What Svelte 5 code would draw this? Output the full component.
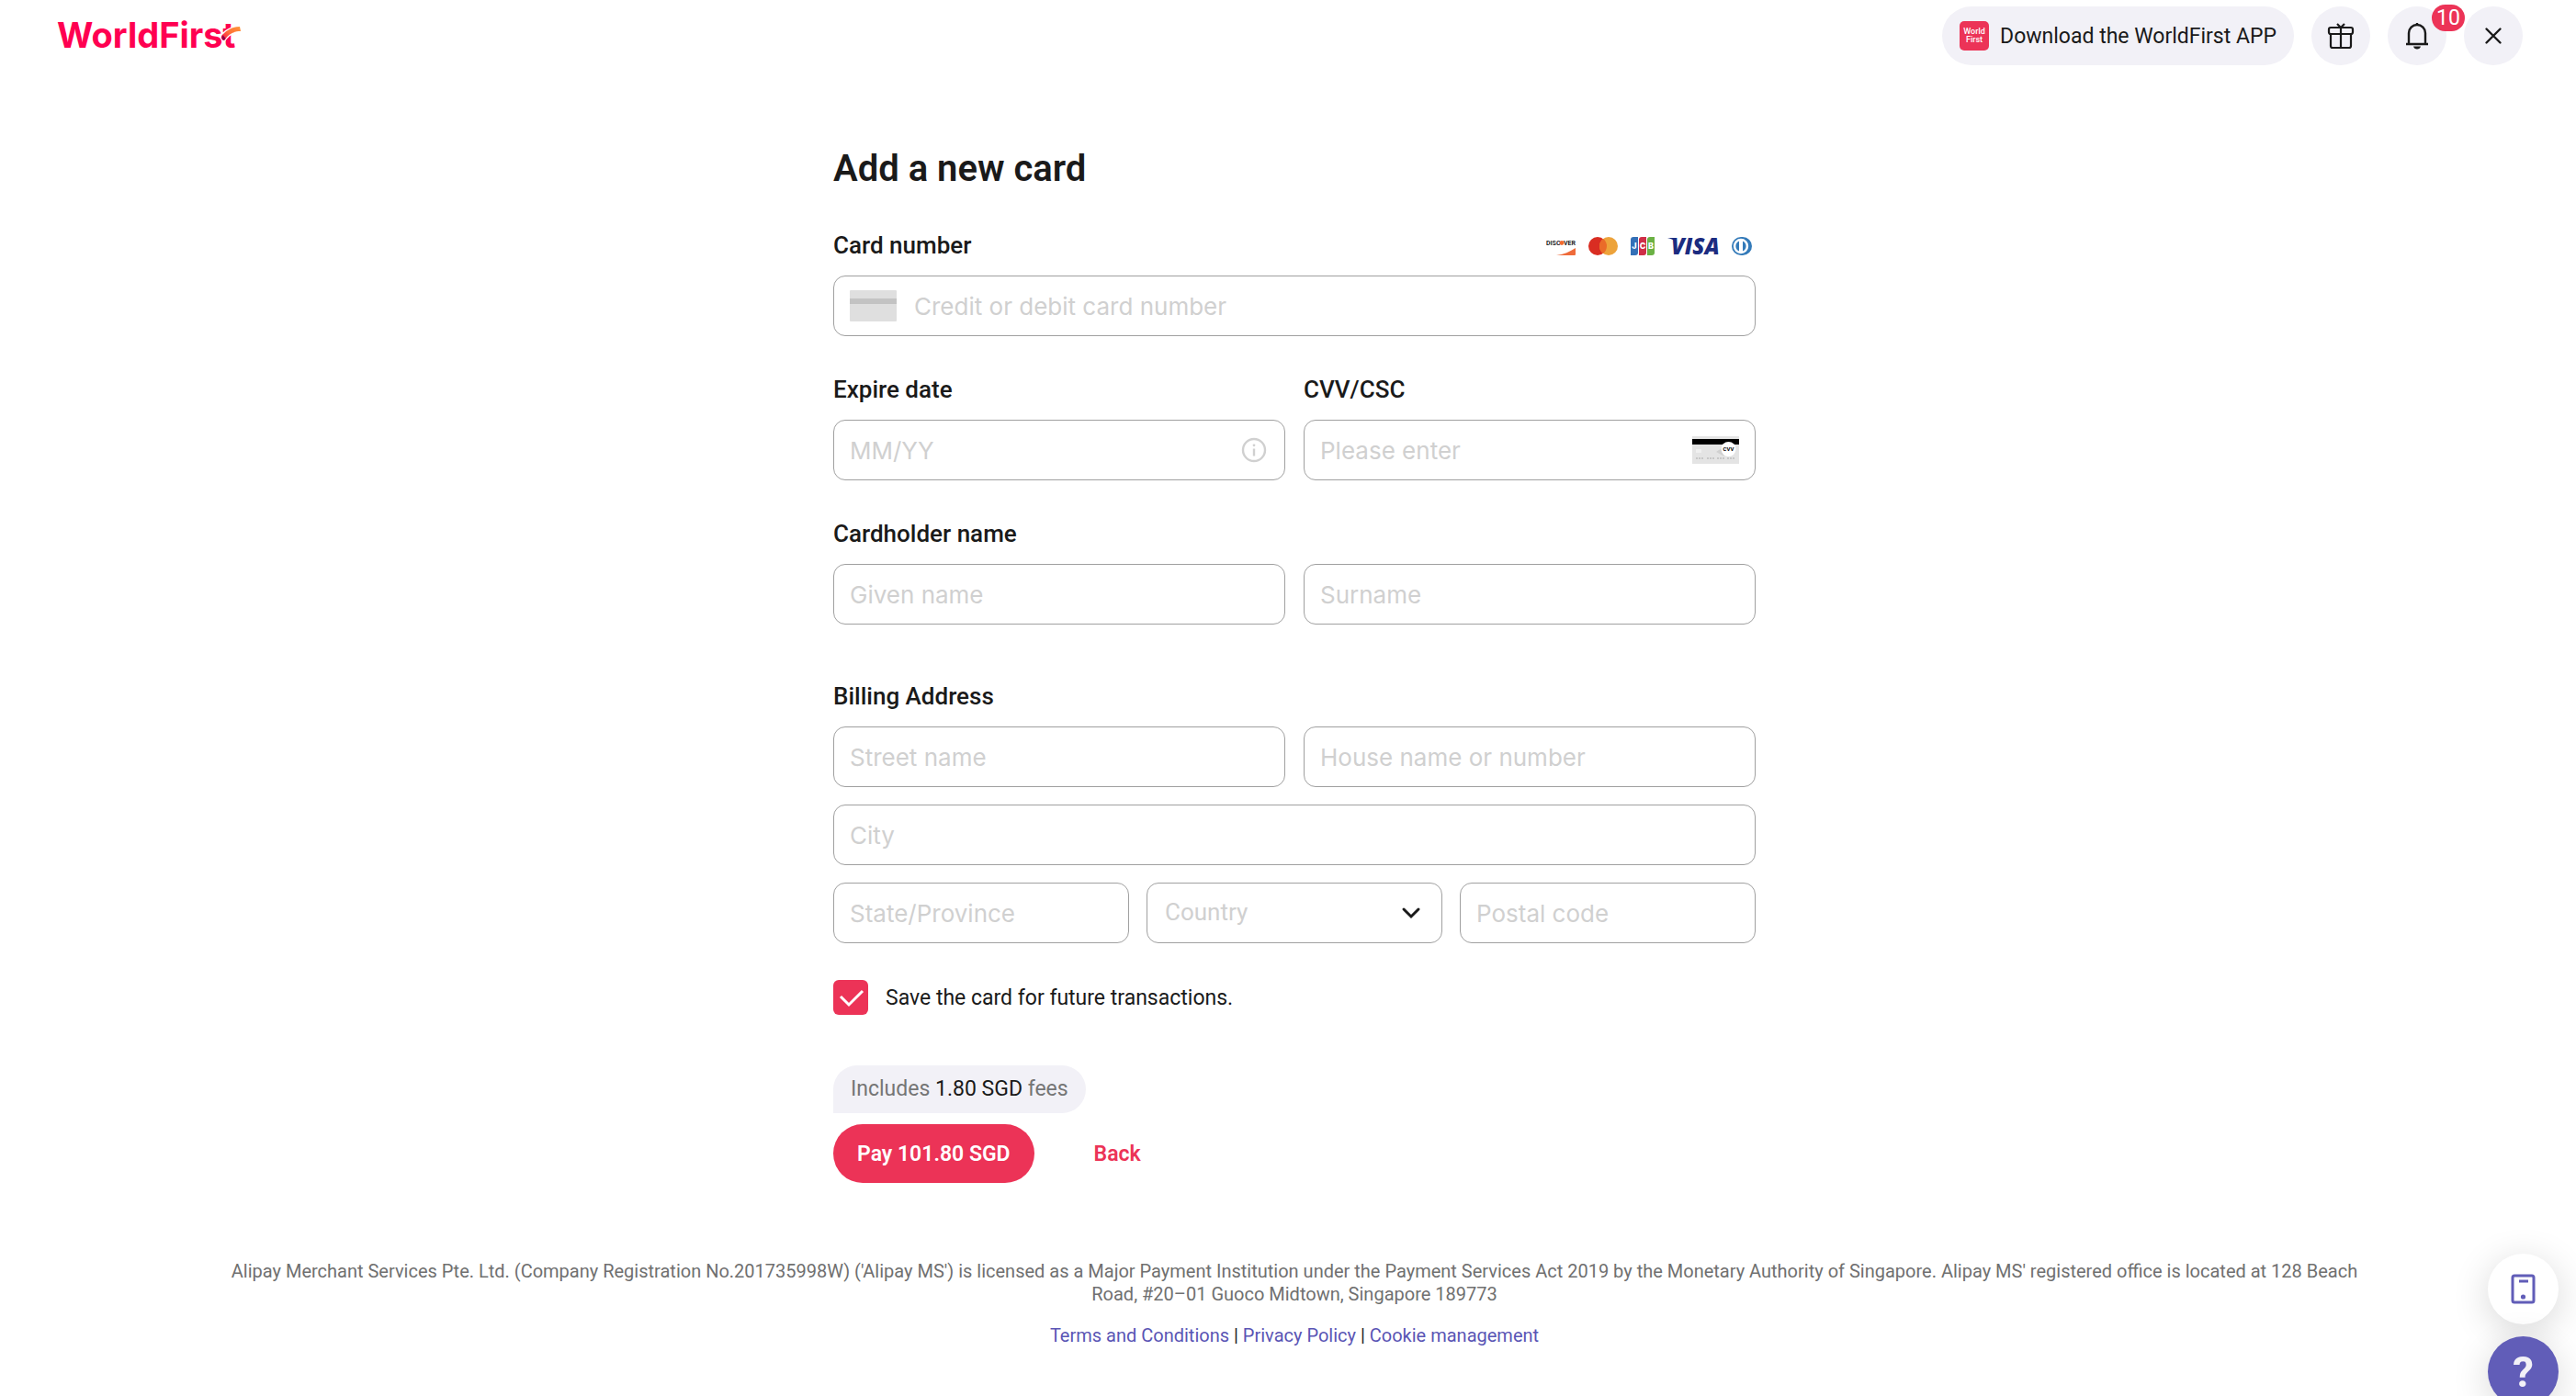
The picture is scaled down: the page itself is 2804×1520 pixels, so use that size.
<script lang="ts">
  let cardNumber = $state('')
  let expiry = $state('')
  let cvv = $state('')
  let givenName = $state('')
  let surname = $state('')
  let street = $state('')
  let house = $state('')
  let city = $state('')
  let province = $state('')
  let country = $state('')
  let postalCode = $state('')
  let saveCard = $state(true)

  const notifications = 10
  const countries = ['Singapore', 'Malaysia', 'United Kingdom', 'Australia']
</script>

<header class="topbar">
  <a class="logo" href="#home" aria-label="WorldFirst">
    <svg width="206" height="44" viewBox="0 0 206 44">
      <text class="wordmark" x="0" y="35">WorldFirst</text>
      <path d="M180 28c-3-3-3-6 0-9 5-5 12-8 20-8v7c-8 0-13 4-17 10z" fill="#fff" />
      <path d="M181 27c-3-2-3-5 0-7 5-5 11-8 18-8l1 5c-8 0-13 3-17 9z" fill="url(#swoosh)" />
      <path d="M181 21c-2 2-2 5 1 6 1-1 2-2 1-3s-2-2-2-3z" fill="#8c0046" />
      <defs>
        <linearGradient id="swoosh" x1="0" x2="1" y1="1" y2="0">
          <stop offset="0" stop-color="#ff0051" />
          <stop offset="0.5" stop-color="#ff7038" />
          <stop offset="1" stop-color="#ff9838" />
        </linearGradient>
      </defs>
    </svg>
  </a>

  <nav class="actions">
    <button class="download" type="button">
      <span class="app-icon" aria-hidden="true">World<br />First</span>
      Download the WorldFirst APP
    </button>
    <button class="round" type="button" aria-label="Rewards">
      <svg width="32" height="32" viewBox="0 0 32 32" fill="none" stroke="#1a1a1a" stroke-width="2.2">
        <rect x="3" y="7" width="26" height="7" rx="2" />
        <path d="M5 14v13a2 2 0 0 0 2 2h18a2 2 0 0 0 2-2V14M16 7v22M12 3l4 4 4-4" />
      </svg>
    </button>
    <button class="round" type="button" aria-label="Notifications">
      <svg width="32" height="32" viewBox="0 0 32 32" fill="none" stroke="#1a1a1a" stroke-width="2.4">
        <path d="M4 25h24M7 25V13a9 9 0 0 1 18 0v12M16 4V2" />
        <path d="M12 27.500h8c-.5 2-2 3-4 3s-3.500-1-4-3z" fill="#1a1a1a" stroke="none" />
      </svg>
      <span class="badge">{notifications}</span>
    </button>
    <button class="round" type="button" aria-label="Close">
      <svg width="32" height="32" viewBox="0 0 32 32" fill="none" stroke="#1a1a1a" stroke-width="2.400" stroke-linecap="round">
        <path d="M8.500 8.500l15 15M23.500 8.500l-15 15" />
      </svg>
    </button>
  </nav>
</header>

<main>
  <form onsubmit={(e) => e.preventDefault()}>
    <h1>Add a new card</h1>

    <section class="group">
      <div class="label-row">
        <label for="card-number">Card number</label>
        <div class="brands">
          <svg width="32" height="20" viewBox="0 0 32 20" role="img" aria-label="Discover">
            <text class="discover" x="0" y="9">DISC</text>
            <circle cx="17" cy="6.500" r="2.400" fill="#f26a2e" />
            <text class="discover" x="19" y="9">VER</text>
            <path d="M11 20c8-1 15-4 21-8v7a1 1 0 0 1-1 1z" fill="#ef6b3a" />
          </svg>
          <svg width="32" height="20" viewBox="0 0 32 20" role="img" aria-label="Mastercard">
            <circle cx="10" cy="10" r="10" fill="#d92d22" />
            <circle cx="22" cy="10" r="10" fill="#eda33b" />
            <path d="M16 2a10 10 0 0 1 0 16 10 10 0 0 1 0-16z" fill="#ea6b29" />
          </svg>
          <svg width="26" height="20" viewBox="0 0 26 20" role="img" aria-label="JCB">
            <path d="M3 0h5v17a3 3 0 0 1-3 3H0V3a3 3 0 0 1 3-3z" fill="#3470b7" />
            <path d="M12 0h5v17a3 3 0 0 1-3 3H9V3a3 3 0 0 1 3-3z" fill="#cf2e47" />
            <path d="M21 0h5v17a3 3 0 0 1-3 3h-5V3a3 3 0 0 1 3-3z" fill="#6bb144" />
            <text class="jcb" x="4" y="13">J</text>
            <text class="jcb" x="13" y="13">C</text>
            <text class="jcb" x="22" y="13">B</text>
          </svg>
          <svg width="56" height="20" viewBox="0 0 56 20" role="img" aria-label="Visa">
            <path d="M0 1h7l2 4C7 3 4 2 0 1z" fill="#1c2c80" />
            <text class="visa" x="4" y="19">VISA</text>
          </svg>
          <svg width="22" height="20" viewBox="0 0 22 20" role="img" aria-label="Diners Club">
            <path d="M10 0h2a10 10 0 0 1 0 20h-2a10 10 0 0 1 0-20z" fill="#337ab9" />
            <circle cx="10" cy="10" r="8.200" fill="#fff" />
            <path d="M8 4.500a6 6 0 0 0 0 11zM12 4.500a6 6 0 0 1 0 11z" fill="#337ab9" />
          </svg>
        </div>
      </div>
      <div class="field">
        <svg class="card-icon" width="51" height="34" viewBox="0 0 51 34" aria-hidden="true">
          <rect width="51" height="34" rx="1" fill="#dfdfdf" />
          <rect y="9" width="51" height="6" fill="#c3c3c3" />
        </svg>
        <input id="card-number" placeholder="Credit or debit card number" bind:value={cardNumber} />
      </div>
    </section>

    <div class="cols two">
      <section class="group">
        <label for="expiry">Expire date</label>
        <div class="field">
          <input id="expiry" placeholder="MM/YY" bind:value={expiry} />
          <svg width="30" height="30" viewBox="0 0 30 30" fill="none" stroke="#d0d0d0" stroke-width="2.400" aria-hidden="true">
            <circle cx="14" cy="15" r="12" />
            <path d="M14 13.500v8" />
            <circle cx="14" cy="9.800" r="1.400" fill="#d0d0d0" stroke="none" />
          </svg>
        </div>
      </section>
      <section class="group">
        <label for="cvv">CVV/CSC</label>
        <div class="field">
          <input id="cvv" placeholder="Please enter" bind:value={cvv} />
          <svg width="51" height="30" viewBox="0 0 51 30" aria-hidden="true">
            <rect width="51" height="30" fill="#e4e4e4" />
            <rect y="3" width="51" height="6" fill="#000" />
            <rect x="4" y="14" width="6" height="4" fill="#f0f0f0" />
            <path d="M26 17l6-4 3 9z" fill="#d0d0d0" />
            <path d="M4 24h9m3 0h9m2 0h9m2 0h9" stroke="#aaa" stroke-dasharray="2 1" />
            <circle cx="39.500" cy="14" r="8" fill="#fff" />
            <text class="cvv-mark" x="39.500" y="16" text-anchor="middle">CVV</text>
          </svg>
        </div>
      </section>
    </div>

    <section class="group">
      <label for="given-name">Cardholder name</label>
      <div class="cols two">
        <div class="field">
          <input id="given-name" placeholder="Given name" bind:value={givenName} />
        </div>
        <div class="field">
          <input aria-label="Surname" placeholder="Surname" bind:value={surname} />
        </div>
      </div>
    </section>

    <section class="group address">
      <label for="street">Billing Address</label>
      <div class="rows">
        <div class="cols two">
          <div class="field">
            <input id="street" placeholder="Street name" bind:value={street} />
          </div>
          <div class="field">
            <input aria-label="House name or number" placeholder="House name or number" bind:value={house} />
          </div>
        </div>
        <div class="field">
          <input aria-label="City" placeholder="City" bind:value={city} />
        </div>
        <div class="cols three">
          <div class="field">
            <input aria-label="State/Province" placeholder="State/Province" bind:value={province} />
          </div>
          <div class="field">
            <select aria-label="Country" class:empty={!country} bind:value={country}>
              <option value="" disabled>Country</option>
              {#each countries as name}
                <option value={name}>{name}</option>
              {/each}
            </select>
            <svg class="chevron" width="32" height="24" viewBox="0 0 32 24" fill="none" stroke="#1a1a1a" stroke-width="3" stroke-linecap="round" aria-hidden="true">
              <path d="M8 8l8 8 8-8" />
            </svg>
          </div>
          <div class="field">
            <input aria-label="Postal code" placeholder="Postal code" bind:value={postalCode} />
          </div>
        </div>
      </div>
    </section>

    <label class="save">
      <input type="checkbox" bind:checked={saveCard} />
      <svg class="box" width="38" height="38" viewBox="0 0 38 38" aria-hidden="true">
        <rect width="38" height="38" rx="6" />
        <path d="M8 18l9 9 15-15" fill="none" stroke="#fff" stroke-width="3" />
      </svg>
      Save the card for future transactions.
    </label>

    <p class="fees">Includes <strong>1.80 SGD</strong> fees</p>
    <div class="submit-row">
      <button class="pay" type="submit">Pay 101.80 SGD</button>
      <button class="back" type="button">Back</button>
    </div>
  </form>
</main>

<footer>
  <p>
    Alipay Merchant Services Pte. Ltd. (Company Registration No.201735998W) ('Alipay MS') is licensed as a Major Payment
    Institution under the Payment Services Act 2019 by the Monetary Authority of Singapore. Alipay MS' registered office
    is located at 128 Beach Road, #20–01 Guoco Midtown, Singapore 189773
  </p>
  <nav class="legal">
    <a href="#terms">Terms and Conditions</a> | <a href="#privacy">Privacy Policy</a> | <a href="#cookies">Cookie management</a>
  </nav>
</footer>

<aside class="floating">
  <button class="phone" type="button" aria-label="Mobile app">
    <svg width="28" height="34" viewBox="0 0 28 34" fill="none" stroke="#615db8">
      <rect x="2" y="2" width="23" height="29" rx="2" stroke-width="3" />
      <path d="M9 8h10" stroke-width="3" />
      <circle cx="13.500" cy="25" r="2.600" fill="#615db8" stroke="none" />
    </svg>
  </button>
  <button class="help" type="button" aria-label="Help">?</button>
</aside>

<style>
  :global(body) {
    background: #fff;
    color: #1a1a1a;
    font-family: Roboto, sans-serif;
    font-size: 23px;
  }
  button, input, select {
    font: inherit;
    color: inherit;
    border: none;
    background: none;
    padding: 0;
    margin: 0;
    box-sizing: border-box;
  }
  button { cursor: pointer; }
  svg { display: block; flex-shrink: 0; overflow: visible; }

  .topbar {
    display: flex;
    justify-content: space-between;
    align-items: center;
    padding: 7px 58px 7px 62px;
  }
  .wordmark {
    font-family: Inter, sans-serif;
    font-size: 38px;
    font-weight: 700;
    fill: #ff0051;
  }
  .actions { display: flex; gap: 19px; }
  .download {
    display: flex;
    align-items: center;
    gap: 12px;
    height: 64px;
    padding: 0 19px;
    border-radius: 32px;
    background: #f2f1f7;
  }
  .app-icon {
    display: flex;
    align-items: center;
    justify-content: center;
    width: 32px;
    height: 32px;
    border-radius: 5px;
    background: #ec3357;
    color: #fff;
    font-size: 9px;
    font-weight: 500;
    line-height: 9px;
  }
  .round {
    position: relative;
    display: flex;
    align-items: center;
    justify-content: center;
    width: 64px;
    height: 64px;
    border-radius: 50%;
    background: #f2f1f7;
  }
  .badge {
    position: absolute;
    top: -2px;
    right: -20px;
    z-index: 1;
    min-width: 36px;
    height: 29px;
    border-radius: 15px;
    background: #ec3357;
    color: #fff;
    font-size: 23px;
    line-height: 29px;
    text-align: center;
  }

  main { padding: 68px 0 0 14px; }
  form {
    max-width: 1004px;
    margin: 0 auto;
  }
  h1 {
    margin: 0 0 28px;
    font-size: 40px;
    font-weight: 600;
    line-height: 76px;
  }
  .group { margin-bottom: 40px; }
  .group label {
    display: block;
    margin-bottom: 15px;
    font-size: 26px;
    font-weight: 500;
    line-height: 35px;
  }
  .group:not(:first-of-type) label,
  .cols .group label { padding-top: 1px; }
  .label-row { display: flex; justify-content: space-between; }
  .brands {
    display: flex;
    align-items: center;
    gap: 14px;
    height: 35px;
    padding-right: 4px;
  }
  .discover { font-size: 7px; font-weight: 700; fill: #222; }
  .jcb { font-family: Inter, sans-serif; font-size: 9px; font-weight: 800; fill: #fff; text-anchor: middle; }
  .visa { font-family: "Open Sans", sans-serif; font-size: 24px; font-weight: 800; font-style: italic; fill: #1c2c80; }
  .cvv-mark { font-size: 6px; font-weight: 700; }

  .field {
    position: relative;
    display: flex;
    align-items: center;
    gap: 19px;
    height: 66px;
    padding: 0 17px;
    border: 1px solid #a0a0a0;
    border-radius: 13px;
    box-sizing: border-box;
  }
  .field input {
    flex: 1;
    min-width: 0;
    height: 64px;
    font-family: Inter, sans-serif;
    font-size: 26px;
    outline: none;
  }
  .field input::placeholder { color: #d0d0d0; opacity: 1; }
  .field select {
    flex: 1;
    min-width: 0;
    height: 64px;
    padding: 0 2px 2px;
    appearance: none;
    font-size: 26px;
    outline: none;
  }
  .field select.empty { color: #d0d0d0; }
  .chevron { pointer-events: none; }

  .cols { display: grid; }
  .two { grid-template-columns: repeat(2, minmax(0, 1fr)); gap: 20px; }
  .three { grid-template-columns: repeat(3, minmax(0, 1fr)); gap: 19px; }
  .rows { display: grid; gap: 19px; }
  .address { padding-top: 20px; }

  .save {
    position: relative;
    display: flex;
    align-items: center;
    gap: 19px;
    width: fit-content;
    cursor: pointer;
  }
  .save input {
    position: absolute;
    width: 38px;
    height: 38px;
    opacity: 0;
  }
  .box rect { fill: #ec3357; }
  .save input:not(:checked) + .box rect { fill: #d0d0d0; }

  .fees {
    width: fit-content;
    margin: 55px 0 12px;
    padding: 0 19px;
    border-radius: 26px 26px 26px 0;
    background: #f2f1f7;
    color: #757575;
    line-height: 52px;
  }
  .fees strong { color: #1a1a1a; font-weight: 400; }
  .submit-row { display: flex; gap: 65px; }
  .pay, .back {
    height: 64px;
    border-radius: 32px;
    font-weight: 600;
  }
  .pay { padding: 0 26px; background: #ec3357; color: #fff; }
  .back { color: #ec3357; }

  footer {
    padding: 84px 230px 50px 244px;
    color: #707070;
    font-size: 20px;
    line-height: 25px;
    text-align: center;
  }
  footer p { margin: 0 0 20px; }
  .legal { color: #1a1a1a; }
  .legal a { color: #5a55b5; text-decoration: none; }

  .floating {
    position: fixed;
    right: 19px;
    bottom: -12px;
    display: grid;
    gap: 13px;
  }
  .floating button {
    display: flex;
    align-items: center;
    justify-content: center;
    width: 77px;
    height: 77px;
    border-radius: 50%;
    background: #fff;
    box-shadow: 0 8px 40px rgba(0, 0, 0, 0.16);
  }
  .floating .help {
    background: #615db8;
    color: #f2f1f7;
    font-size: 46px;
    font-weight: 700;
  }
</style>
